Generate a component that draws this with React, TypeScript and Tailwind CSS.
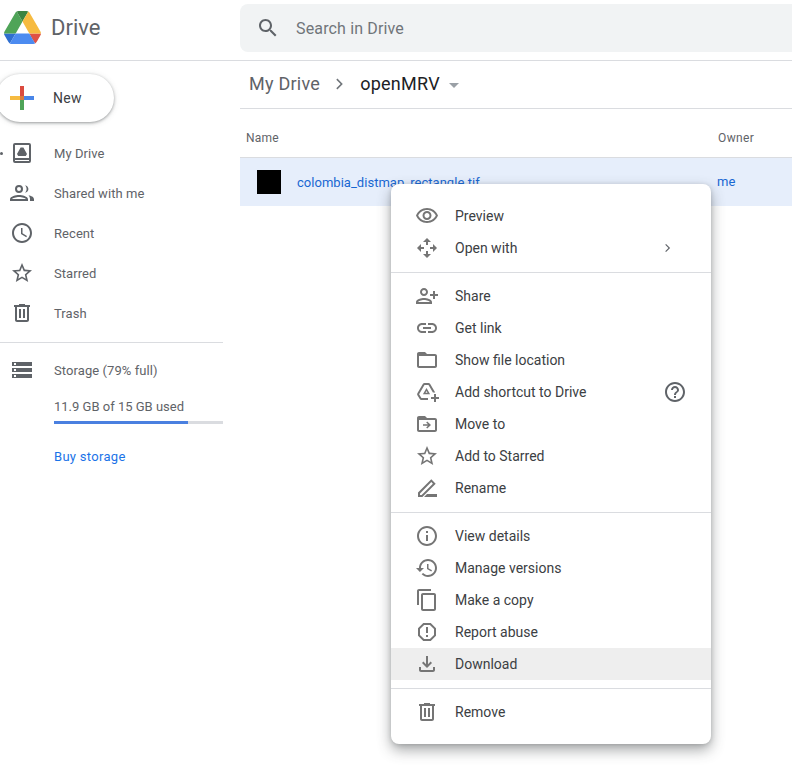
const font = { fontFamily: "Roboto, 'Liberation Sans', sans-serif" };

function Icon({ d, className = "" }: { d: string; className?: string }) {
  return (
    <svg viewBox="0 0 24 24" className={`h-6 w-6 shrink-0 fill-current ${className}`}>
      <path d={d} />
    </svg>
  );
}

// material icon paths
const paths = {
  search: "M15.5 14h-.79l-.28-.27C15.41 12.59 16 11.11 16 9.5 16 5.91 13.09 3 9.5 3S3 5.91 3 9.5 5.91 16 9.5 16c1.61 0 3.09-.59 4.23-1.57l.27.28v.79l5 4.99L20.49 19l-4.99-5zm-6 0C7.01 14 5 11.99 5 9.5S7.01 5 9.5 5 14 7.01 14 9.5 11.99 14 9.5 14z",
  clock: "M11.99 2C6.47 2 2 6.48 2 12s4.47 10 9.99 10C17.52 22 22 17.52 22 12S17.52 2 11.99 2zM12 20c-4.42 0-8-3.58-8-8s3.58-8 8-8 8 3.58 8 8-3.58 8-8 8zm.5-13H11v6l5.25 3.15.75-1.23-4.5-2.67z",
  star: "M22 9.24l-7.19-.62L12 2 9.19 8.63 2 9.24l5.46 4.73L5.82 21 12 17.27 18.18 21l-1.63-7.03L22 9.24zM12 15.4l-3.76 2.27 1-4.28-3.32-2.88 4.38-.38L12 6.1l1.71 4.04 4.38.38-3.32 2.88 1 4.28L12 15.4z",
  trash: "M15 4V3H9v1H4v2h1v13c0 1.1.9 2 2 2h10c1.1 0 2-.9 2-2V6h1V4h-5zm2 15H7V6h10v13zM9 8h2v9H9zm4 0h2v9h-2z",
  storage: "M2 20h20v-4H2v4zm2-3h2v2H4v-2zM2 4v4h20V4H2zm4 3H4V5h2v2zm-4 7h20v-4H2v4zm2-3h2v2H4v-2z",
  eye: "M12 6c3.79 0 7.17 2.13 8.82 5.5C19.17 14.87 15.79 17 12 17s-7.17-2.13-8.82-5.5C4.83 8.13 8.21 6 12 6m0-2C7 4 2.73 7.11 1 11.5 2.73 15.89 7 19 12 19s9.27-3.11 11-7.5C21.27 7.11 17 4 12 4zm0 5c1.38 0 2.5 1.12 2.5 2.5S13.38 14 12 14s-2.5-1.12-2.5-2.5S10.62 9 12 9m0-2c-2.48 0-4.5 2.02-4.5 4.5S9.52 16 12 16s4.5-2.02 4.5-4.5S14.48 7 12 7z",
  move: "M12 2L8 6h3v3h2V6h3zM12 22l4-4h-3v-3h-2v3H8zM2 12l4 4v-3h3v-2H6V8zM22 12l-4-4v3h-3v2h3v3z",
  person: "M9 12c2.21 0 4-1.79 4-4s-1.79-4-4-4-4 1.79-4 4 1.79 4 4 4zm0-6c1.1 0 2 .9 2 2s-.9 2-2 2-2-.9-2-2 .9-2 2-2zm0 8c-2.67 0-8 1.34-8 4v2h16v-2c0-2.66-5.33-4-8-4zm-6 4c.22-.72 3.31-2 6-2 2.7 0 5.8 1.29 6 2H3zm17-3v-3h3v-2h-3V7h-2v3h-3v2h3v3h2z",
  link: "M3.9 12c0-1.71 1.39-3.1 3.1-3.1h4V7H7c-2.76 0-5 2.24-5 5s2.24 5 5 5h4v-1.9H7c-1.71 0-3.1-1.39-3.1-3.1zM8 13h8v-2H8v2zm9-6h-4v1.9h4c1.71 0 3.1 1.39 3.1 3.1s-1.39 3.1-3.1 3.1h-4V17h4c2.76 0 5-2.24 5-5s-2.24-5-5-5z",
  folder: "M20 6h-8l-2-2H4c-1.1 0-1.99.9-1.99 2L2 18c0 1.1.9 2 2 2h16c1.1 0 2-.9 2-2V8c0-1.1-.9-2-2-2zm0 12H4V8h16v10z",
  moveTo: "M20 6h-8l-2-2H4c-1.1 0-1.99.9-1.99 2L2 18c0 1.1.9 2 2 2h16c1.1 0 2-.9 2-2V8c0-1.1-.9-2-2-2zm0 12H4V8h16v10zM12.2 9.5l-1 1 1.8 1.7H8v1.6h5l-1.8 1.7 1 1 3.8-3.5z",
  shortcut: "M13.5 3h-4c-.7 0-1.3.4-1.7 1L2.4 13.3c-.4.6-.4 1.4 0 2l2.3 3.8c.4.6 1 1 1.7 1H13v-2H6.4l-2.3-3.8L9.5 5h4l4.4 7.6h2.3L15.2 4c-.4-.6-1-1-1.7-1zM11.5 8l-3.6 6.2h7.2L11.5 8zm0 3.1l1 1.6h-2l1-1.6zM19 14v3h-3v2h3v3h2v-3h3v-2h-3v-3z",
  pencil: "M16.3 3.3L3 16.6V21h4.4L20.7 7.700 16.300 3.300zM6.600 19H5v-1.600L16.300 6.100l1.600 1.600L6.600 19zM12 18h10v3H9z",
  info: "M11 7h2v2h-2zm0 4h2v6h-2zm1-9C6.48 2 2 6.48 2 12s4.48 10 10 10 10-4.48 10-10S17.52 2 12 2zm0 18c-4.41 0-8-3.59-8-8s3.59-8 8-8 8 3.59 8 8-3.59 8-8 8z",
  history: "M13 3c-4.97 0-9 4.03-9 9H1l3.89 3.89.07.14L9 12H6c0-3.87 3.13-7 7-7s7 3.13 7 7-3.13 7-7 7c-1.93 0-3.68-.79-4.94-2.06l-1.42 1.42C8.27 19.99 10.51 21 13 21c4.97 0 9-4.03 9-9s-4.03-9-9-9zm-1 5v5l4.28 2.54.72-1.21-3.5-2.08V8H12z",
  copy: "M16 1H4c-1.1 0-2 .9-2 2v14h2V3h12V1zm3 4H8c-1.1 0-2 .9-2 2v14c0 1.1.9 2 2 2h11c1.1 0 2-.9 2-2V7c0-1.1-.9-2-2-2zm0 16H8V7h11v14z",
  report: "M15.73 3H8.27L3 8.27v7.46L8.27 21h7.46L21 15.73V8.27L15.73 3zM19 14.9L14.9 19H9.1L5 14.9V9.1L9.1 5h5.8L19 9.1v5.8zM11 7h2v6h-2zM11 15h2v2h-2z",
  download: "M18 15v3H6v-3H4v3c0 1.1.9 2 2 2h12c1.1 0 2-.9 2-2v-3h-2zm-1-4l-1.41-1.41L13 12.17V4h-2v8.17L8.41 9.59 7 11l5 5 5-5z",
  help: "M11 18h2v-2h-2v2zm1-16C6.48 2 2 6.48 2 12s4.48 10 10 10 10-4.48 10-10S17.52 2 12 2zm0 18c-4.41 0-8-3.59-8-8s3.59-8 8-8 8 3.59 8 8-3.59 8-8 8zm0-14c-2.21 0-4 1.79-4 4h2c0-1.1.9-2 2-2s2 .9 2 2c0 2-3 1.75-3 5h2c0-2.25 3-2.5 3-5 0-2.21-1.79-4-4-4z",
  myDrive: "M5 2h14a2 2 0 0 1 2 2v16a2 2 0 0 1-2 2H5a2 2 0 0 1-2-2V4a2 2 0 0 1 2-2zm0 2v13h14V4H5zm0 15v1h14v-1H5zM10.6 6.5h2.8L17 13l-1.2 2H8.2L7 13l3.6-6.5z",
  shared: "M9 4a4 4 0 1 1 0 8 4 4 0 0 1 0-8zm0 2a2 2 0 1 0 0 4 2 2 0 0 0 0-4zm0 8c3 0 9 1.4 9 4.2V20H0v-1.8C0 15.4 6 14 9 14zm0 2c-3 0-6.4 1.2-7 2h14c-.6-.8-4-2-7-2zM15 4.2c2 .3 3.4 1.9 3.4 3.8S17 11.500 15 11.800c1-1 1.600-2.400 1.600-3.800S16 5.200 15 4.200zM18.500 14.300c2.500.6 5.500 1.700 5.500 3.900V20h-4v-2c0-1.500-.6-2.700-1.500-3.700z",
};

const navItems = [
  { label: "My Drive", d: paths.myDrive },
  { label: "Shared with me", d: paths.shared },
  { label: "Recent", d: paths.clock },
  { label: "Starred", d: paths.star },
  { label: "Trash", d: paths.trash },
];

type MenuItem = { label: string; d: string; arrow?: boolean; help?: boolean; active?: boolean };

const menuGroups: MenuItem[][] = [
  [
    { label: "Preview", d: paths.eye },
    { label: "Open with", d: paths.move, arrow: true },
  ],
  [
    { label: "Share", d: paths.person },
    { label: "Get link", d: paths.link },
    { label: "Show file location", d: paths.folder },
    { label: "Add shortcut to Drive", d: paths.shortcut, help: true },
    { label: "Move to", d: paths.moveTo },
    { label: "Add to Starred", d: paths.star },
    { label: "Rename", d: paths.pencil },
  ],
  [
    { label: "View details", d: paths.info },
    { label: "Manage versions", d: paths.history },
    { label: "Make a copy", d: paths.copy },
    { label: "Report abuse", d: paths.report },
    { label: "Download", d: paths.download, active: true },
  ],
  [{ label: "Remove", d: paths.trash }],
];

function DriveLogo() {
  return (
    <svg viewBox="0 0 87.3 78" className="h-[33px] w-[37px]">
      <path d="m6.6 66.85 3.85 6.65c.8 1.4 1.95 2.5 3.3 3.3l13.75-23.8h-27.5c0 1.55.4 3.1 1.2 4.5z" fill="#2f6fd0" />
      <path d="m43.65 25-13.75-23.8c-1.35.8-2.5 1.9-3.3 3.3l-25.4 44a9.06 9.06 0 0 0 -1.2 4.5h27.5z" fill="#4fa458" />
      <path d="m73.55 76.8c1.35-.8 2.5-1.9 3.3-3.3l1.6-2.75 7.65-13.25c.8-1.4 1.2-2.95 1.2-4.5h-27.502l5.852 11.5z" fill="#de5246" />
      <path d="m43.65 25 13.75-23.8c-1.35-.8-2.9-1.2-4.5-1.2h-18.5c-1.6 0-3.15.45-4.5 1.2z" fill="#3b8442" />
      <path d="m59.8 53h-32.3l-13.75 23.8c1.35.8 2.9 1.2 4.5 1.2h50.8c1.6 0 3.15-.45 4.5-1.2z" fill="#4c8bf0" />
      <path d="m73.4 26.5-12.7-22c-.8-1.4-1.95-2.5-3.3-3.3l-13.75 23.8 16.15 28h27.45c0-1.55-.4-3.1-1.2-4.5z" fill="#f6bb41" />
    </svg>
  );
}

function PlusIcon() {
  return (
    <svg viewBox="0 0 24 24" className="h-6 w-6">
      <rect x="0" y="10" width="10" height="4" fill="#f6bb41" />
      <rect x="14" y="10" width="10" height="4" fill="#4a86e8" />
      <rect x="10" y="0" width="4" height="10" fill="#db4b3f" />
      <rect x="10" y="14" width="4" height="10" fill="#4fa458" />
      <rect x="10" y="10" width="4" height="4" fill="#d9793f" />
    </svg>
  );
}

export default function App() {
  return (
    <div className="relative h-[772px] w-[792px] overflow-hidden bg-white" style={font}>
      {/* top bar */}
      <header className="flex h-[61px] items-start border-b border-[#dadce0]">
        <div className="flex h-full w-[240px] shrink-0 items-start pl-1 pt-[11px]">
          <DriveLogo />
          <span className="ml-[10px] mt-[3px] text-[22px] leading-[28px] text-[#5f6368]">Drive</span>
        </div>
        <div className="mt-1 flex h-12 flex-1 items-center rounded-l-lg bg-[#f1f3f4] pl-4 text-[#5f6368]">
          <Icon d={paths.search} />
          <span className="ml-[16px] pt-[1px] text-base tracking-[0.15px] text-[#70757a]">Search in Drive</span>
        </div>
      </header>

      <div className="flex">
        {/* sidebar */}
        <aside className="w-[240px] shrink-0">
          <div className="-ml-1 mt-[13px] flex h-12 w-[118px] items-center rounded-full bg-white pl-[14px] shadow-[0_1px_3px_rgba(60,64,67,0.45),0_1px_6px_rgba(60,64,67,0.15)]">
            <PlusIcon />
            <span className="ml-[19px] text-sm tracking-[0.25px] text-[#3c4043]">New</span>
          </div>

          <nav className="relative mt-[11px]">
            <span className="absolute left-0 top-[19px] h-[3px] w-[3px] rounded-full bg-[#5f6368]" />
            {navItems.map((item) => (
              <div key={item.label} className="flex h-10 items-center gap-5 pl-[10px] text-[#5f6368]">
                <Icon d={item.d} />
                <span className="pt-[2px] text-[13px] tracking-[0.06px]">{item.label}</span>
              </div>
            ))}
          </nav>

          <div className="mt-[9px] w-[223px] border-t border-[#dadce0] pt-[15px]">
            <div className="flex h-6 items-center gap-5 pl-[10px] text-[#5f6368]">
              <Icon d={paths.storage} />
              <span className="pt-[2px] text-[13px] tracking-[0.08px]">Storage (79% full)</span>
            </div>
            <div className="pl-[54px]">
              <p className="mt-[15px] text-[13px] leading-[20px] text-[#5f6368]">11.9 GB of 15 GB used</p>
              <div className="mt-[4px] h-[3px] w-[169px] bg-[#dadce0]">
                <div className="h-full w-[134px] bg-[#4a80e0]" />
              </div>
              <p className="mt-[23px] text-[13px] leading-[20px] tracking-[0.3px] text-[#1a73e8]">Buy storage</p>
            </div>
          </div>
        </aside>

        {/* file list */}
        <main className="flex-1">
          <div className="flex h-12 items-center border-b border-[#dadce0] pb-[1px] pl-[9px]">
            <span className="text-lg tracking-[0.25px] text-[#5f6368]">My Drive</span>
            <svg viewBox="0 0 24 24" className="ml-2 h-6 w-6 fill-[#70757a]">
              <path d="M9.4 6.600 8.300 7.700 12.600 12 8.300 16.300 9.400 17.400 14.800 12z" />
            </svg>
            <span className="ml-[8px] text-lg tracking-[0.25px] text-[#202124]">openMRV</span>
            <span className="ml-[9px] mt-[2px] h-0 w-0 border-x-[5px] border-t-[5px] border-x-transparent border-t-[#9aa0a6]" />
          </div>
          <div className="flex h-[49px] items-center border-b border-[#dadce0] pl-[6px] pt-[10px] text-xs text-[#5f6368]">
            <span className="w-[472px] tracking-[0.2px]">Name</span>
            <span className="tracking-[0.4px]">Owner</span>
          </div>
          <div className="flex h-[48px] items-center bg-[#e6eefb] pl-[17px] text-[13px] text-[#1967d2]">
            <span className="h-6 w-6 bg-black" />
            <span className="ml-4 w-[420px] pt-[2px] tracking-[0.03px]">colombia_distmap_rectangle.tif</span>
            <span>me</span>
          </div>
        </main>
      </div>

      {/* context menu */}
      <div className="absolute left-[391px] top-[184px] w-[320px] rounded-lg bg-white py-4 shadow-[0_6px_14px_rgba(60,64,67,0.45),0_1px_4px_rgba(60,64,67,0.2)]">
        {menuGroups.map((group, i) => (
          <div key={i} className={i > 0 ? "mt-2 border-t border-[#dadce0] pt-[7px]" : ""}>
            {group.map((item) => (
              <div
                key={item.label}
                className={`flex h-8 items-center pl-6 pr-6 text-sm text-[#3c4043] ${item.active ? "bg-[#eeeeee]" : ""}`}
              >
                <Icon d={item.d} className="text-[#757575]" />
                <span className="ml-4 flex-1">{item.label}</span>
                {item.arrow && (
                  <svg viewBox="0 0 24 24" className="mr-[10px] h-[18px] w-[18px] fill-[#5f6368]">
                    <path d="M9.400 6.600 8.300 7.700 12.600 12 8.300 16.300 9.400 17.400 14.800 12z" />
                  </svg>
                )}
                {item.help && <Icon d={paths.help} className="text-[#5f6368]" />}
              </div>
            ))}
          </div>
        ))}
      </div>
    </div>
  );
}
